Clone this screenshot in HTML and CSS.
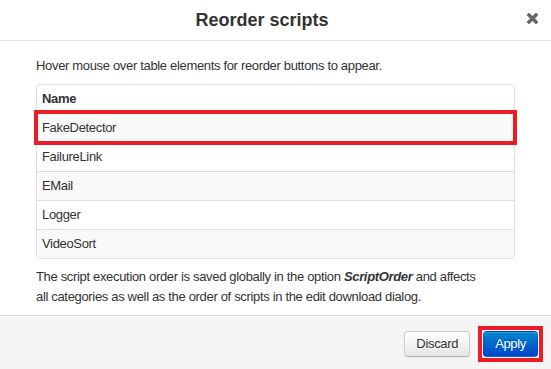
FILE: index.html
```html
<!DOCTYPE html>
<html lang="en">
<head>
  <meta charset="UTF-8">
  <meta name="viewport" content="width=device-width, initial-scale=1.0">
  <title>Reorder scripts</title>
  <link rel="stylesheet" href="styles.css">
</head>
<body>
  <div class="modal">
    <div class="modal-header">
      <h3>Reorder scripts</h3>
      <button class="close" title="Close">
        <svg width="11" height="11" viewBox="0 0 11 11">
          <path d="M2 2 L9 9 M9 2 L2 9" stroke="#666" stroke-width="3.4" stroke-linecap="square"/>
        </svg>
      </button>
    </div>
    <div class="modal-body">
      <p>Hover mouse over table elements for reorder buttons to appear.</p>
      <table class="table">
        <thead>
          <tr><th>Name</th></tr>
        </thead>
        <tbody>
          <tr class="marked"><td>FakeDetector</td></tr>
          <tr><td>FailureLink</td></tr>
          <tr><td>EMail</td></tr>
          <tr><td>Logger</td></tr>
          <tr><td>VideoSort</td></tr>
        </tbody>
      </table>
      <p class="note">The script execution order is saved globally in the option <b><i>ScriptOrder</i></b> and affects all categories as well as the order of scripts in the edit download dialog.</p>
    </div>
    <div class="modal-footer">
      <button class="btn">Discard</button>
      <span class="marked-btn"><button class="btn btn-primary">Apply</button></span>
    </div>
  </div>
</body>
</html>
```

FILE: styles.css
```css
body {
  margin: 0;
  font-family: "Liberation Sans", Arial, sans-serif;
  font-size: 13px;
  letter-spacing: -0.33px;
  line-height: 20px;
  color: #333;
  background: #fff;
}
.modal {
  width: 551px;
  height: 369px;
  display: flex;
  flex-direction: column;
  background: #fff;
  overflow: hidden;
}
.modal-header {
  display: flex;
  flex-shrink: 0;
  height: 40px;
  padding-right: 13px;
  border-bottom: 1px solid #e5e5e5;
}
.modal-header h3 {
  flex: 1;
  margin: 0 3px 0 0;
  font-size: 18px;
  letter-spacing: 0;
  line-height: 40px;
  font-weight: bold;
  text-align: center;
  color: #333;
}
.close {
  margin-top: 13px;
  padding: 0;
  width: 11px;
  height: 11px;
  border: none;
  background: none;
  cursor: pointer;
  align-self: flex-start;
}
.close svg {
  display: block;
}
.modal-body {
  display: flex;
  flex-direction: column;
  gap: 8px;
  padding: 15px 36px 8px;
}
.modal-body p {
  margin: 0;
}
.modal-body .note {
  max-width: 448px;
}
.table {
  width: 100%;
  border: 1px solid #ddd;
  border-radius: 4px;
  border-spacing: 0;
  border-collapse: separate;
}
.table th, .table td {
  padding: 4px 5px;
  text-align: left;
  line-height: 20px;
}
.table th {
  font-weight: bold;
}
.table td {
  border-top: 1px solid #ddd;
}
.table tbody tr:nth-child(odd) td {
  background: #f9f9f9;
}
.table tbody tr:last-child td {
  border-bottom-left-radius: 4px;
  border-bottom-right-radius: 4px;
}
.marked td {
  outline: 4px solid #ed1c24;
  outline-offset: -1px;
}
.modal-footer {
  flex: 1;
  display: flex;
  justify-content: flex-end;
  align-items: flex-start;
  gap: 8px;
  padding: 10px 8px 0;
  background: #f5f5f5;
  border-top: 1px solid #ddd;
  box-shadow: inset 0 1px 0 #fff;
}
.modal-footer > .btn {
  margin-top: 5px;
}
.btn {
  display: block;
  font-family: inherit;
  font-size: 13px;
  letter-spacing: -0.33px;
  line-height: 20px;
  padding: 2px 11px;
  color: #333;
  border: 1px solid #ccc;
  border-bottom-color: #b3b3b3;
  border-radius: 4px;
  background: linear-gradient(#fff, #e6e6e6);
  box-shadow: inset 0 1px 0 rgba(255,255,255,.2), 0 1px 2px rgba(0,0,0,.05);
  text-shadow: 0 1px 1px rgba(255,255,255,.75);
  cursor: pointer;
}
.btn-primary {
  color: #fff;
  border-color: rgba(0,0,0,.1);
  background: linear-gradient(#0088cc, #0044cc);
  text-shadow: 0 -1px 0 rgba(0,0,0,.25);
}
.marked-btn {
  display: block;
  padding: 1px;
  border: 4px solid #ed1c24;
}
```
